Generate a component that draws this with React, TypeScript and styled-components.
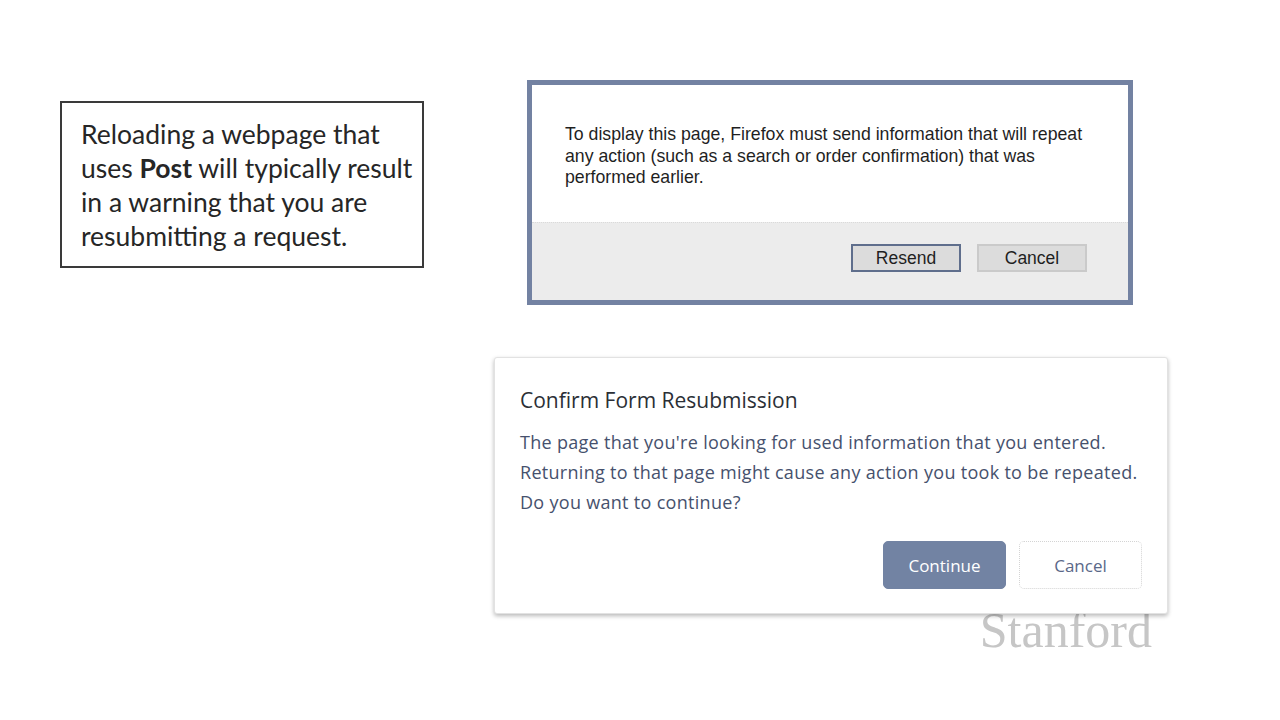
import styled, { createGlobalStyle } from 'styled-components'

const GlobalStyle = createGlobalStyle`
  html, body {
    margin: 0;
    padding: 0;
    background: #ffffff;
  }
  #root {
    width: 1280px;
    height: 720px;
    overflow: hidden;
  }
`

const Slide = styled.div`
  width: 1280px;
  height: 720px;
  display: flex;
  align-items: flex-start;
  background: #fff;
`

const LeftColumn = styled.div`
  padding: 101px 0 0 60px;
  width: 494px;
  flex-shrink: 0;
  box-sizing: border-box;
`

const NoteBox = styled.div`
  width: 364px;
  height: 167px;
  box-sizing: border-box;
  border: 2px solid #3a3a3a;
  padding: 14px 0 0 19px;
  font-family: Lato, 'Open Sans', sans-serif;
  font-size: 26.5px;
  line-height: 34px;
  color: #262626;
  white-space: nowrap;

  b {
    font-weight: 700;
  }
`

const RightColumn = styled.div`
  display: flex;
  flex-direction: column;
  padding-top: 80px;
`

const FirefoxDialog = styled.div`
  margin-left: 33px;
  width: 606px;
  height: 225px;
  box-sizing: border-box;
  border: 5px solid #7382a2;
  display: flex;
  flex-direction: column;
  background: #fff;
`

const FirefoxBody = styled.div`
  flex: 1;
  padding: 39px 0 0 33px;
  font-family: 'Liberation Sans', Arial, sans-serif;
  font-size: 17.7px;
  line-height: 21.5px;
  color: #1f1f1f;
  white-space: nowrap;
`

const FirefoxFooter = styled.div`
  height: 78px;
  display: flex;
  justify-content: flex-end;
  align-items: flex-start;
  gap: 16px;
  padding: 21px 41px 0 0;
  box-sizing: border-box;
  background: #ececec;
  border-top: 1px dotted #dadada;
`

const FxButton = styled.button<{ $default?: boolean }>`
  width: 110px;
  height: 28px;
  font-family: 'Liberation Sans', Arial, sans-serif;
  font-size: 17.5px;
  color: #1f1f1f;
  background: #dcdcdc;
  border: 2px solid ${p => (p.$default ? '#5f6e8c' : '#cacaca')};
  padding: 0;
`

const ChromeDialog = styled.div`
  margin-top: 52px;
  width: 674px;
  height: 257px;
  box-sizing: border-box;
  background: #fff;
  border-radius: 3px;
  border: 1px solid #e2e2e2;
  box-shadow: 0 2px 4px rgba(0, 0, 0, 0.28);
  padding: 27px 25px 0 25px;
  font-family: 'Open Sans', sans-serif;
  position: relative;
  z-index: 1;
`

const ChromeTitle = styled.div`
  font-size: 21px;
  line-height: 30px;
  color: #2b2f36;
`

const ChromeText = styled.div`
  margin-top: 12px;
  font-size: 18px;
  line-height: 30px;
  letter-spacing: 0.3px;
  color: #46516d;
  white-space: nowrap;
`

const ChromeActions = styled.div`
  display: flex;
  justify-content: flex-end;
  gap: 13px;
  margin-top: 24px;
`

const ChromeButton = styled.button<{ $primary?: boolean }>`
  width: 123px;
  height: 48px;
  border-radius: 5px;
  font-family: 'Open Sans', sans-serif;
  font-size: 17px;
  padding: 0;
  color: ${p => (p.$primary ? '#ffffff' : '#5a6888')};
  background: ${p => (p.$primary ? '#7283a3' : '#ffffff')};
  border: 1px ${p => (p.$primary ? 'solid #7283a3' : 'dotted #d4d4d4')};
`

const Wordmark = styled.div`
  align-self: flex-end;
  margin: -9px 16px 0 0;
  font-family: 'Liberation Serif', 'Times New Roman', serif;
  font-size: 50px;
  line-height: 50px;
  color: #c6c6c6;
`

export default function App() {
  return (
    <>
      <GlobalStyle />
      <Slide>
        <LeftColumn>
          <NoteBox>
            Reloading a webpage that
            <br />
            uses <b>Post</b> will typically result
            <br />
            in a warning that you are
            <br />
            resubmitting a request.
          </NoteBox>
        </LeftColumn>
        <RightColumn>
          <FirefoxDialog>
            <FirefoxBody>
              To display this page, Firefox must send information that will repeat
              <br />
              any action (such as a search or order confirmation) that was
              <br />
              performed earlier.
            </FirefoxBody>
            <FirefoxFooter>
              <FxButton $default>Resend</FxButton>
              <FxButton>Cancel</FxButton>
            </FirefoxFooter>
          </FirefoxDialog>
          <ChromeDialog>
            <ChromeTitle>Confirm Form Resubmission</ChromeTitle>
            <ChromeText>
              The page that you're looking for used information that you entered.
              <br />
              Returning to that page might cause any action you took to be repeated.
              <br />
              Do you want to continue?
            </ChromeText>
            <ChromeActions>
              <ChromeButton $primary>Continue</ChromeButton>
              <ChromeButton>Cancel</ChromeButton>
            </ChromeActions>
          </ChromeDialog>
          <Wordmark>Stanford</Wordmark>
        </RightColumn>
      </Slide>
    </>
  )
}
